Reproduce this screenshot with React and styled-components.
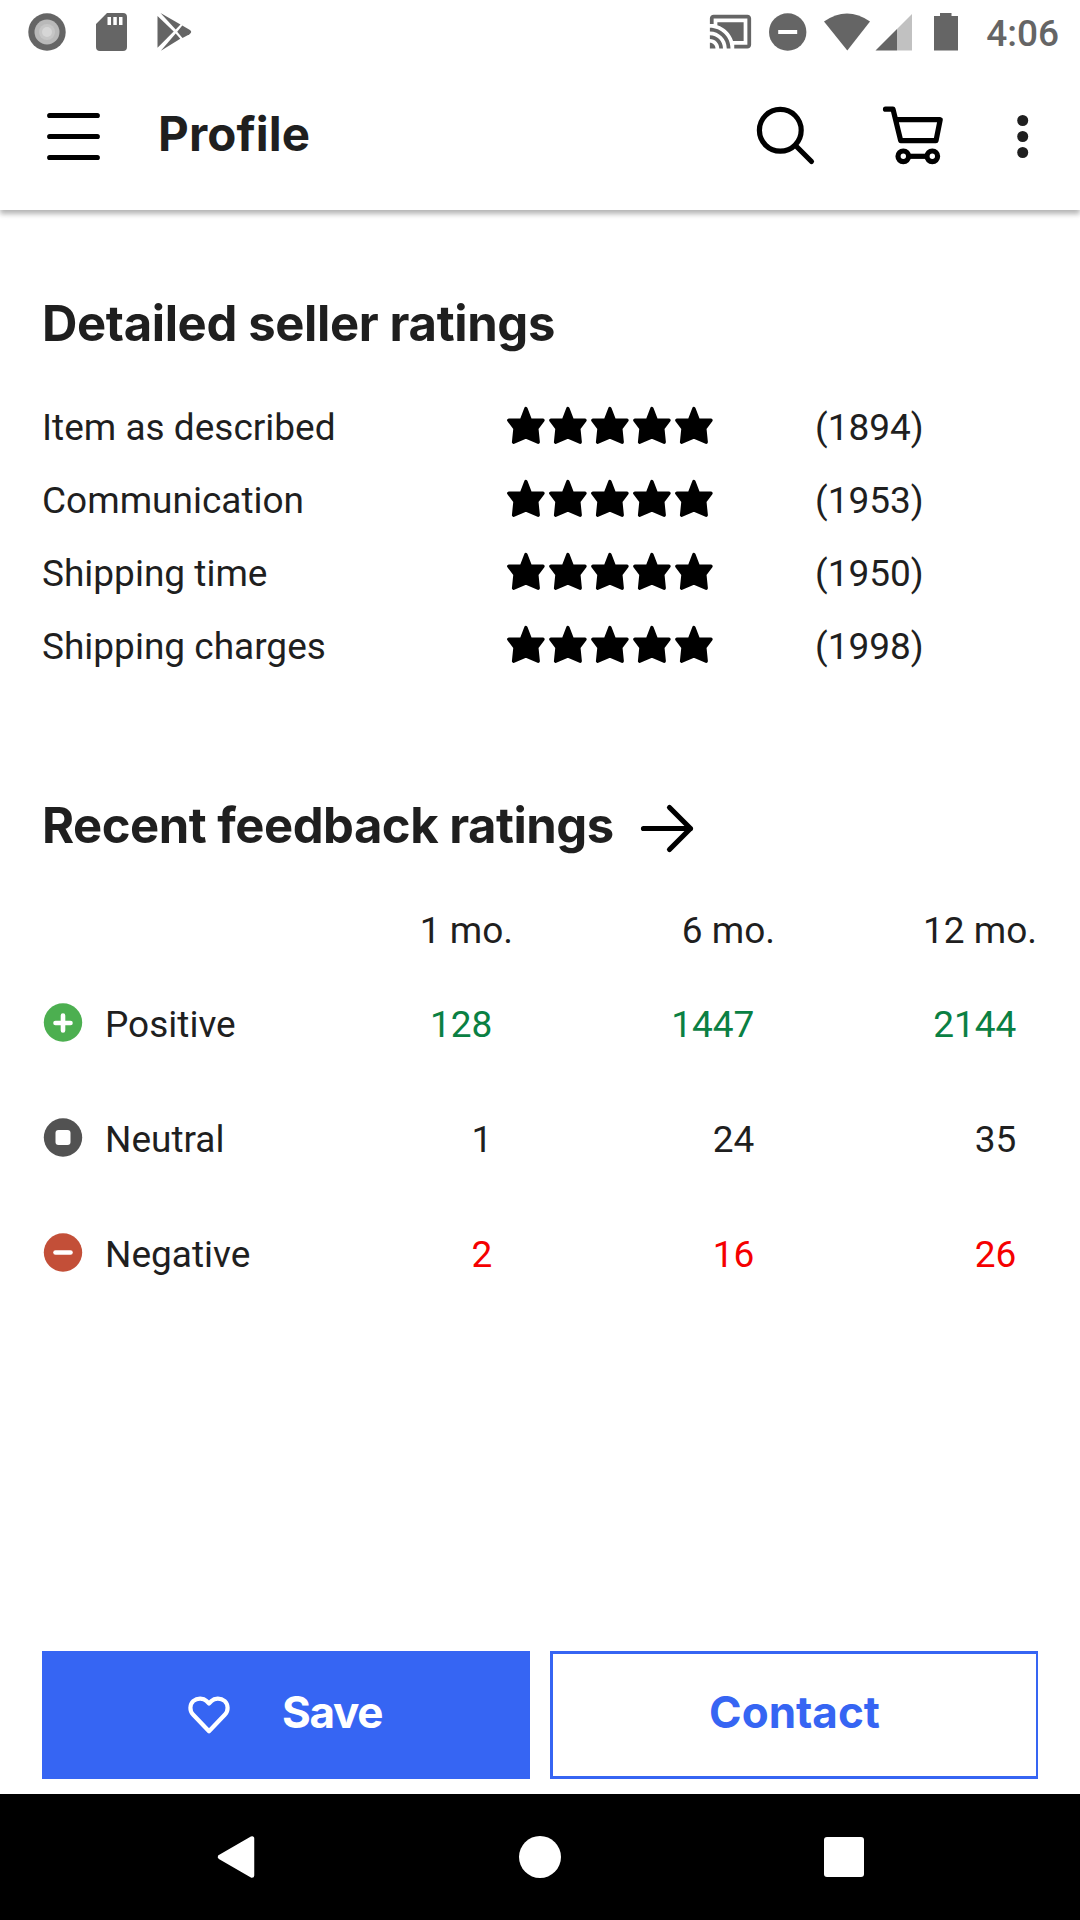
import React from "react";
import styled, { createGlobalStyle } from "styled-components";

const GlobalStyle = createGlobalStyle`
  *, *::before, *::after { box-sizing: border-box; }
  body { margin: 0; background: #fff; }
`;

const Screen = styled.div`
  display: flex;
  flex-direction: column;
  width: 1080px;
  height: 1920px;
  overflow: hidden;
  background: #fff;
  color: #1f1f1f;
  font-family: Roboto, "Liberation Sans", sans-serif;
  font-size: 37px;
`;

const Icon = styled.svg`
  display: block;
  flex: none;
  overflow: visible;
`;

const StatusBar = styled.div`
  display: flex;
  justify-content: space-between;
  height: 63px;
  padding: 0 21px 0 28px;
  color: #656565;
`;

const StatusGroup = styled.div`
  display: flex;
  align-items: center;
  gap: ${(p) => p.$gap}px;
`;

const Clock = styled.span`
  padding: 4px 0 0 9px;
  font-weight: 500;
  line-height: 44px;
`;

const Toolbar = styled.header`
  display: flex;
  align-items: center;
  height: 147px;
  padding: 0 50px 0 46px;
  box-shadow: 0 4px 5px rgba(0, 0, 0, 0.27), 0 1px 10px rgba(0, 0, 0, 0.06);
  clip-path: inset(0 0 -20px 0);
`;

const Title = styled.h1`
  flex: 1;
  margin: 0 0 5px 56px;
  font-family: Inter, Roboto, sans-serif;
  font-size: 47.5px;
  line-height: 60px;
  font-weight: 700;
  letter-spacing: 0.1px;
`;

const Actions = styled.div`
  display: flex;
  align-items: center;
`;

const ActionButton = styled.button`
  padding: 0;
  border: 0;
  background: none;
  margin-left: ${(p) => p.$gap || 0}px;
`;

const Content = styled.main`
  display: flex;
  flex: 1;
  flex-direction: column;
  padding: 84px 42px 0;
`;

const Section = styled.section`
  margin-bottom: ${(p) => p.$after || 0}px;
`;

const HeadingRow = styled.div`
  display: flex;
  align-items: center;
  gap: 26px;
  height: 60px;
  margin-bottom: ${(p) => p.$after}px;
`;

const Heading = styled.h2`
  margin: 0;
  font-family: Inter, Roboto, sans-serif;
  font-size: 49px;
  line-height: 60px;
  font-weight: 700;
  letter-spacing: ${(p) => p.$tracking}px;
  white-space: nowrap;
`;

const RatingRow = styled.div`
  display: grid;
  grid-template-columns: 463px 310px 1fr;
  align-items: center;
  height: 73px;
`;

const Stars = styled.div`
  display: flex;
  gap: 2px;
  padding-bottom: 4px;
`;

const FeedbackRow = styled.div`
  display: grid;
  grid-template-columns: 209px 262px 262px 262px;
  align-items: center;
  height: ${(p) => p.$height}px;
`;

const FeedbackLabel = styled.div`
  display: flex;
  align-items: center;
  gap: 23px;
  padding-left: 2px;
`;

const IconSlot = styled.span`
  display: flex;
  padding-bottom: 4px;
`;

const Cell = styled.span`
  padding-right: ${(p) => p.$inset}px;
  text-align: right;
  color: ${(p) => p.$color || "inherit"};
`;

const ButtonBar = styled.div`
  display: grid;
  grid-template-columns: 488px 488px;
  gap: 20px;
  height: 128px;
  margin: 0 42px 15px;
`;

const BarButton = styled.button`
  display: flex;
  align-items: center;
  justify-content: center;
  gap: 51px;
  padding: 0 ${(p) => (p.$filled ? 3 : 0)}px 0 0;
  border: 3px solid #3665f3;
  border-right-width: ${(p) => (p.$filled ? 3 : 2)}px;
  background: ${(p) => (p.$filled ? "#3665f3" : "#fff")};
  color: ${(p) => (p.$filled ? "#fff" : "#3665f3")};
  font-family: Inter, Roboto, sans-serif;
  font-size: 44px;
  font-weight: 700;
  letter-spacing: ${(p) => p.$tracking}px;
`;

const ButtonText = styled.span`
  padding-bottom: 6px;
`;

const NavBar = styled.nav`
  display: flex;
  align-items: center;
  justify-content: space-between;
  height: 126px;
  padding: 0 215px;
  background: #000;
`;

const Star = () => (
  <Icon width="40" height="40" viewBox="0 0 40 40">
    <path
      d="M20.9 2.5 25.4 14.3H38L31.8 22.5 33.2 36.2 20.9 31 8.6 36.2 10 22.5 3.8 14.3H16.4Z"
      fill="#000"
      stroke="#000"
      strokeWidth="3.4"
      strokeLinejoin="round"
    />
  </Icon>
);

const feedbackIcons = {
  positive: { fill: "#4caf50", d: "M19 11.5V26.5M11.5 19H26.5" },
  negative: { fill: "#c34f38", d: "M11.5 18.5H26.5" },
  neutral: { fill: "#525252" },
};

const FeedbackIcon = ({ kind }) => {
  const { fill, d } = feedbackIcons[kind];
  return (
    <Icon width="38" height="38" viewBox="0 0 38 38">
      <circle cx="19" cy="18.5" r="19.2" fill={fill} />
      {d ? (
        <path d={d} stroke="#fff" strokeWidth="4.6" strokeLinecap="round" />
      ) : (
        <rect x="11.5" y="11" width="15" height="15" rx="3" fill="#fff" />
      )}
    </Icon>
  );
};

const ratings = [
  ["Item as described", "(1894)"],
  ["Communication", "(1953)"],
  ["Shipping time", "(1950)"],
  ["Shipping charges", "(1998)"],
];

const feedback = [
  { kind: "positive", label: "Positive", values: ["128", "1447", "2144"], color: "#0a8043" },
  { kind: "neutral", label: "Neutral", values: ["1", "24", "35"] },
  { kind: "negative", label: "Negative", values: ["2", "16", "26"], color: "#f50000" },
];

const SystemStatus = () => (
  <StatusBar>
    <StatusGroup $gap={29.5}>
      <Icon width="38" height="38" viewBox="0 0 38 38">
        <circle cx="19" cy="19" r="18.7" fill="#656565" />
        <circle cx="19" cy="19" r="12.5" fill="#b9b9b9" />
        <circle cx="19" cy="19" r="8" fill="#c6c6c6" />
        <circle cx="19" cy="19" r="5" fill="#d6d6d6" />
      </Icon>
      <Icon width="31" height="38" viewBox="0 0 31 38">
        <path
          fillRule="evenodd"
          fill="currentColor"
          d="M11 0H27Q31 0 31 4V34Q31 38 27 38H4Q0 38 0 34V11ZM11.5 4V12H15V4ZM17.3 4V12H20.8V4ZM23 4V12H26.5V4Z"
        />
      </Icon>
      <Icon width="36" height="38" viewBox="-0.5 0 36 38">
        <g fill="currentColor">
          <path d="M1 3 17.2 18.6 1 34.8Z" />
          <path d="M4 0 24 11.5 19.2 16.4Z" />
          <path d="M25.8 12.6 33 16.8Q36.4 19 33 21.2L26 25 20.7 18.7Z" />
          <path d="M4.4 37.8 19.2 20.4 23.8 25.8Z" />
        </g>
      </Icon>
    </StatusGroup>
    <StatusGroup $gap={17}>
      <Icon width="45" height="45" viewBox="0 0 24 24">
        <path
          fill="currentColor"
          d="M1 18v3h3c0-1.66-1.34-3-3-3zm0-4v2c2.76 0 5 2.24 5 5h2c0-3.87-3.13-7-7-7zm18-7H5v1.63c3.96 1.28 7.09 4.41 8.37 8.37H19V7zM1 10v2c4.97 0 9 4.03 9 9h2c0-6.08-4.93-11-11-11zm20-7H3c-1.1 0-2 .9-2 2v3h2V5h18v14h-7v2h7c1.1 0 2-.9 2-2V5c0-1.1-.9-2-2-2z"
        />
      </Icon>
      <Icon width="37" height="38" viewBox="0 0 37 38">
        <circle cx="17.7" cy="19" r="18.7" fill="currentColor" />
        <rect x="8.2" y="17" width="19" height="4" fill="#fff" />
      </Icon>
      <Icon width="88" height="38" viewBox="0 0 88 38">
        <path d="M0 8.5Q23 -7.5 46 8.5L23.3 37.5Z" fill="currentColor" />
        <path d="M88 1V37.5H73V16Z" fill="#c1c1c1" />
        <path d="M51.5 37.5 73 16V37.5Z" fill="currentColor" />
      </Icon>
      <Icon width="31" height="38" viewBox="0 0 31 38">
        <path d="M11 0H22.5V3H29V37.5H5V3H11Z" fill="currentColor" />
      </Icon>
      <Clock>4:06</Clock>
    </StatusGroup>
  </StatusBar>
);

export default function App() {
  return (
    <Screen>
      <GlobalStyle />
      <SystemStatus />
      <Toolbar>
        <ActionButton aria-label="Menu">
          <Icon width="56" height="61" viewBox="0 0 56 61">
            <path
              d="M3.7 9.5H51.3M3.7 30.5H51.3M3.7 51.5H51.3"
              stroke="#000"
              strokeWidth="5.2"
              strokeLinecap="round"
            />
          </Icon>
        </ActionButton>
        <Title>Profile</Title>
        <Actions>
          <ActionButton aria-label="Search">
            <Icon width="60" height="61" viewBox="0 0 60 61" fill="none" stroke="#000" strokeWidth="5.2">
              <circle cx="24.3" cy="24.3" r="20.9" />
              <path d="M39.5 39.5 55.5 55.5" strokeLinecap="round" />
            </Icon>
          </ActionButton>
          <ActionButton aria-label="Cart" $gap={66}>
            <Icon width="62" height="61" viewBox="0 0 62 61" fill="none" stroke="#000" strokeWidth="5.2">
              <path
                d="M3.5 3.2H11L18.7 34.7H54L58.2 13.7H14"
                strokeLinecap="round"
                strokeLinejoin="round"
              />
              <circle cx="21.3" cy="50.3" r="5.3" />
              <circle cx="50.3" cy="50.3" r="5.3" />
              <path d="M26.5 50.3H45" />
            </Icon>
          </ActionButton>
          <ActionButton aria-label="More" $gap={72}>
            <Icon width="14" height="61" viewBox="0 0 14 61" fill="#1f1f1f">
              <circle cx="6.7" cy="14.5" r="5.5" />
              <circle cx="6.7" cy="30.5" r="5.5" />
              <circle cx="6.7" cy="46.5" r="5.5" />
            </Icon>
          </ActionButton>
        </Actions>
      </Toolbar>
      <Content>
        <Section $after={113}>
          <HeadingRow $after={37}>
            <Heading $tracking={-0.36}>Detailed seller ratings</Heading>
          </HeadingRow>
          {ratings.map(([label, count]) => (
            <RatingRow key={label}>
              <span>{label}</span>
              <Stars>
                {[0, 1, 2, 3, 4].map((n) => (
                  <Star key={n} />
                ))}
              </Stars>
              <span>{count}</span>
            </RatingRow>
          ))}
        </Section>
        <Section>
          <HeadingRow $after={38}>
            <Heading $tracking={-0.5}>Recent feedback ratings</Heading>
            <Icon width="54" height="54" viewBox="0 0 54 54">
              <path
                d="M3.5 29.5H50.5M29.5 8.5 50.5 29.5 29.5 50.5"
                fill="none"
                stroke="#000"
                strokeWidth="5.2"
                strokeLinecap="round"
                strokeLinejoin="round"
              />
            </Icon>
          </HeadingRow>
          <FeedbackRow $height={73}>
            <span />
            <Cell $inset={0}>1 mo.</Cell>
            <Cell $inset={0}>6 mo.</Cell>
            <Cell $inset={0}>12 mo.</Cell>
          </FeedbackRow>
          {feedback.map(({ kind, label, values, color }) => (
            <FeedbackRow key={kind} $height={115}>
              <FeedbackLabel>
                <IconSlot>
                  <FeedbackIcon kind={kind} />
                </IconSlot>
                {label}
              </FeedbackLabel>
              {values.map((value) => (
                <Cell key={value} $inset={20.6} $color={color}>
                  {value}
                </Cell>
              ))}
            </FeedbackRow>
          ))}
        </Section>
      </Content>
      <ButtonBar>
        <BarButton $filled $tracking={-1.3}>
          <Icon width="44" height="40" viewBox="0 0 44 40">
            <path
              d="M22 36.3 6 19.5C2.5 16 2.5 9.5 6.3 6C10.5 2.5 16.5 3 19.5 6L22 8.5 24.5 6C27.5 3 33.5 2.5 37.7 6C41.5 9.5 41.5 16 38 19.5Z"
              fill="none"
              stroke="#fff"
              strokeWidth="4.2"
              strokeLinejoin="round"
            />
          </Icon>
          <ButtonText>Save</ButtonText>
        </BarButton>
        <BarButton $tracking={0}>
          <ButtonText>Contact</ButtonText>
        </BarButton>
      </ButtonBar>
      <NavBar>
        <Icon width="42" height="42" viewBox="0 0 42 42">
          <path
            d="M37 2.5V39.5L5 21Z"
            fill="#fff"
            stroke="#fff"
            strokeWidth="4.5"
            strokeLinejoin="round"
          />
        </Icon>
        <Icon width="42" height="42" viewBox="0 0 42 42">
          <circle cx="21" cy="21" r="21" fill="#fff" />
        </Icon>
        <Icon width="42" height="42" viewBox="0 0 42 42">
          <rect x="1" y="1" width="40" height="40" rx="3" fill="#fff" />
        </Icon>
      </NavBar>
    </Screen>
  );
}
